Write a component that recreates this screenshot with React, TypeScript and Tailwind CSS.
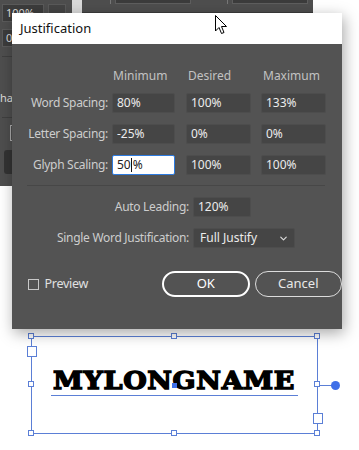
import { ChevronDown } from "lucide-react";

const font = "font-['Noto_Sans','Liberation_Sans',sans-serif]";

function Field({ value, w = "w-[65px]", focused = false }: { value: string; w?: string; focused?: boolean }) {
  if (focused) {
    return (
      <div className={`${w} h-[20px] flex items-center px-[4px] bg-white border border-[#2d7be0] rounded-[2px] text-[12px] text-[#222]`}>
        50<span className="w-px h-[14px] bg-[#111] mx-[0.5px]" />%
      </div>
    );
  }
  return (
    <div className={`${w} h-[20px] flex items-center px-[4px] bg-[#454545] border border-[#4d4d4d] rounded-[2px] text-[12px] text-[#ececec]`}>
      {value}
    </div>
  );
}

function Row({ label, values }: { label: string; values: string[] }) {
  return (
    <div className="flex items-center h-[20px]">
      <div className="w-[96px] mr-[4px] text-right text-[12px] tracking-[-0.3px] text-[#cdcdcd] whitespace-nowrap">{label}</div>
      <Field value={values[0]} w="w-[63px]" focused={values[0] === "50%"} />
      <div className="ml-[11px]"><Field value={values[1]} /></div>
      <div className="ml-[10px]"><Field value={values[2]} /></div>
    </div>
  );
}

function Handle({ x, y }: { x: number; y: number }) {
  return (
    <div
      className="absolute w-[6px] h-[6px] bg-white border border-[#5b7fd6]"
      style={{ left: x - 3, top: y - 3 }}
    />
  );
}

export default function App() {
  return (
    <div className={`relative w-[359px] h-[450px] bg-white overflow-hidden ${font}`}>
      {/* panels behind the dialog */}
      <div className="absolute left-0 top-0 flex items-start">
        <div className="w-[72px] h-[186px] bg-[#4e4e4e] flex flex-col gap-[7px] px-[2px] pt-[4px] text-[11px] text-[#ddd]">
          <div className="flex gap-[4px]">
            <div className="w-[42px] h-[18px] bg-[#3c3c3c] border border-[#5a5a5a] pl-[3px] leading-[16px]">100%</div>
            <div className="w-[18px] h-[18px] bg-[#444] border border-[#5a5a5a]" />
          </div>
          <div className="w-[42px] h-[18px] bg-[#3c3c3c] border border-[#5a5a5a] pl-[3px] leading-[16px]">0%</div>
          <div className="h-px bg-[#3f3f3f] mt-[2px]" />
          <div className="h-[16px] mt-[26px] leading-[16px] -ml-[2px]">han</div>
          <div className="h-px bg-[#3f3f3f] mt-[4px]" />
          <div className="ml-[8px] w-[6px] h-[16px] border border-[#aaa]" />
          <div className="ml-[2px] w-[40px] h-[24px] bg-[#333] rounded-[3px] mt-[2px]" />
        </div>
        <div className="w-[10px] h-[13px] bg-[#dadada]" />
        <div className="w-[231px] h-[13px] bg-[#4e4e4e] border-b border-[#3c3c3c] flex items-start pl-[28px]">
          <div className="w-px h-[4px] bg-[#777]" />
          <div className="ml-[4px] w-[76px] h-[4px] bg-[#3c3c3c] border-b border-x border-[#5e5e5e]" />
          <div className="ml-[36px] w-px h-[4px] bg-[#777]" />
          <div className="ml-[4px] w-[76px] h-[4px] bg-[#3c3c3c] border-b border-x border-[#5e5e5e]" />
        </div>
      </div>

      {/* canvas text frame */}
      <div className="absolute left-[31px] top-[336px] w-[287px] h-[98px] border border-[#5b7fd6]">
        <div className="absolute left-[-5px] top-[9px] w-[10px] h-[11px] bg-white border border-[#5b7fd6]" />
        <div className="absolute left-[281px] top-[76px] w-[10px] h-[11px] bg-white border border-[#5b7fd6]" />
        <div className="absolute left-[19px] top-[30px] w-[247px] flex flex-col items-center">
          <span className="text-[25px] leading-[28px] font-black text-black font-['DejaVu_Serif',serif] tracking-[0.6px] scale-x-[1.08] inline-block [-webkit-text-stroke:1.4px_black]">
            MYLONGNAME
          </span>
          <div className="w-full h-px bg-[#5b7fd6]" />
        </div>
        <div className="absolute left-[140px] top-[46px] w-[5px] h-[5px] bg-[#3f6fe8]" />
        <div className="absolute left-[286px] top-[48px] w-[17px] h-px bg-[#5b7fd6]" />
        <div className="absolute left-[299px] top-[44px] w-[9px] h-[9px] rounded-full bg-[#3f6fe8]" />
      </div>
      <Handle x={31} y={336} />
      <Handle x={174} y={336} />
      <Handle x={317} y={336} />
      <Handle x={31} y={384} />
      <Handle x={317} y={384} />
      <Handle x={31} y={433} />
      <Handle x={174} y={433} />
      <Handle x={317} y={433} />

      {/* dialog */}
      <div className="absolute left-[12px] top-[13px] w-[330px] h-[316px] flex flex-col bg-[#535353] shadow-[2px_4px_14px_rgba(0,0,0,0.35)]">
        <div className="h-[31px] shrink-0 bg-white flex items-center pl-[8px] text-[13px] text-[#111]">Justification</div>
        <div className="flex flex-col pt-[24px]">
          <div className="flex h-[16px] items-center text-[12px] text-[#c2c2c2] leading-[16px]">
            <div className="w-[100px]" />
            <div className="w-[63px] pl-[1px]">Minimum</div>
            <div className="w-[65px] ml-[11px] pl-[2px]">Desired</div>
            <div className="w-[65px] ml-[10px] pl-[2px]">Maximum</div>
          </div>
          <div className="flex flex-col gap-[11px] mt-[9px]">
            <Row label="Word Spacing:" values={["80%", "100%", "133%"]} />
            <Row label="Letter Spacing:" values={["-25%", "0%", "0%"]} />
            <Row label="Glyph Scaling:" values={["50%", "100%", "100%"]} />
          </div>
          <div className="mt-[10px] ml-[15px] w-[298px] h-px bg-[#474747]" />
          <div className="flex flex-col gap-[11px] mt-[11px]">
            <div className="flex items-center h-[20px]">
              <div className="w-[177px] mr-[4px] text-right text-[12px] tracking-[-0.3px] text-[#cdcdcd]">Auto Leading:</div>
              <Field value="120%" w="w-[58px]" />
            </div>
            <div className="flex items-center h-[20px]">
              <div className="w-[177px] mr-[4px] text-right text-[12px] tracking-[-0.3px] text-[#cdcdcd] whitespace-nowrap">Single Word Justification:</div>
              <div className="w-[102px] h-[20px] flex items-center justify-between pl-[6px] pr-[5px] bg-[#454545] border border-[#4d4d4d] rounded-[2px] text-[12px] text-[#ececec]">
                Full Justify
                <ChevronDown size={11} strokeWidth={2.5} className="text-[#ddd]" />
              </div>
            </div>
          </div>
          <div className="flex items-center mt-[23px] h-[26px]">
            <div className="ml-[16px] w-[11px] h-[11px] border border-[#c8c8c8]" />
            <span className="ml-[6px] text-[12.5px] tracking-[-0.3px] text-[#e0e0e0]">Preview</span>
            <div className="ml-[74px] w-[92px] h-[26px] rounded-full border-2 border-white flex items-center justify-center text-[13px] text-white">OK</div>
            <div className="ml-[5px] w-[92px] h-[26px] rounded-full border border-[#dcdcdc] flex items-center justify-center text-[13px] text-[#e8e8e8]">Cancel</div>
          </div>
        </div>
      </div>

      {/* mouse pointer */}
      <svg className="absolute left-[215px] top-[15px]" width="13" height="20" viewBox="0 0 13 20">
        <path d="M0.5 0.5 L0.5 16 L4 12.5 L6.5 18.5 L9 17.5 L6.5 11.5 L11.5 11.5 Z" fill="white" stroke="black" strokeWidth="1" strokeLinejoin="round" />
      </svg>
    </div>
  );
}
